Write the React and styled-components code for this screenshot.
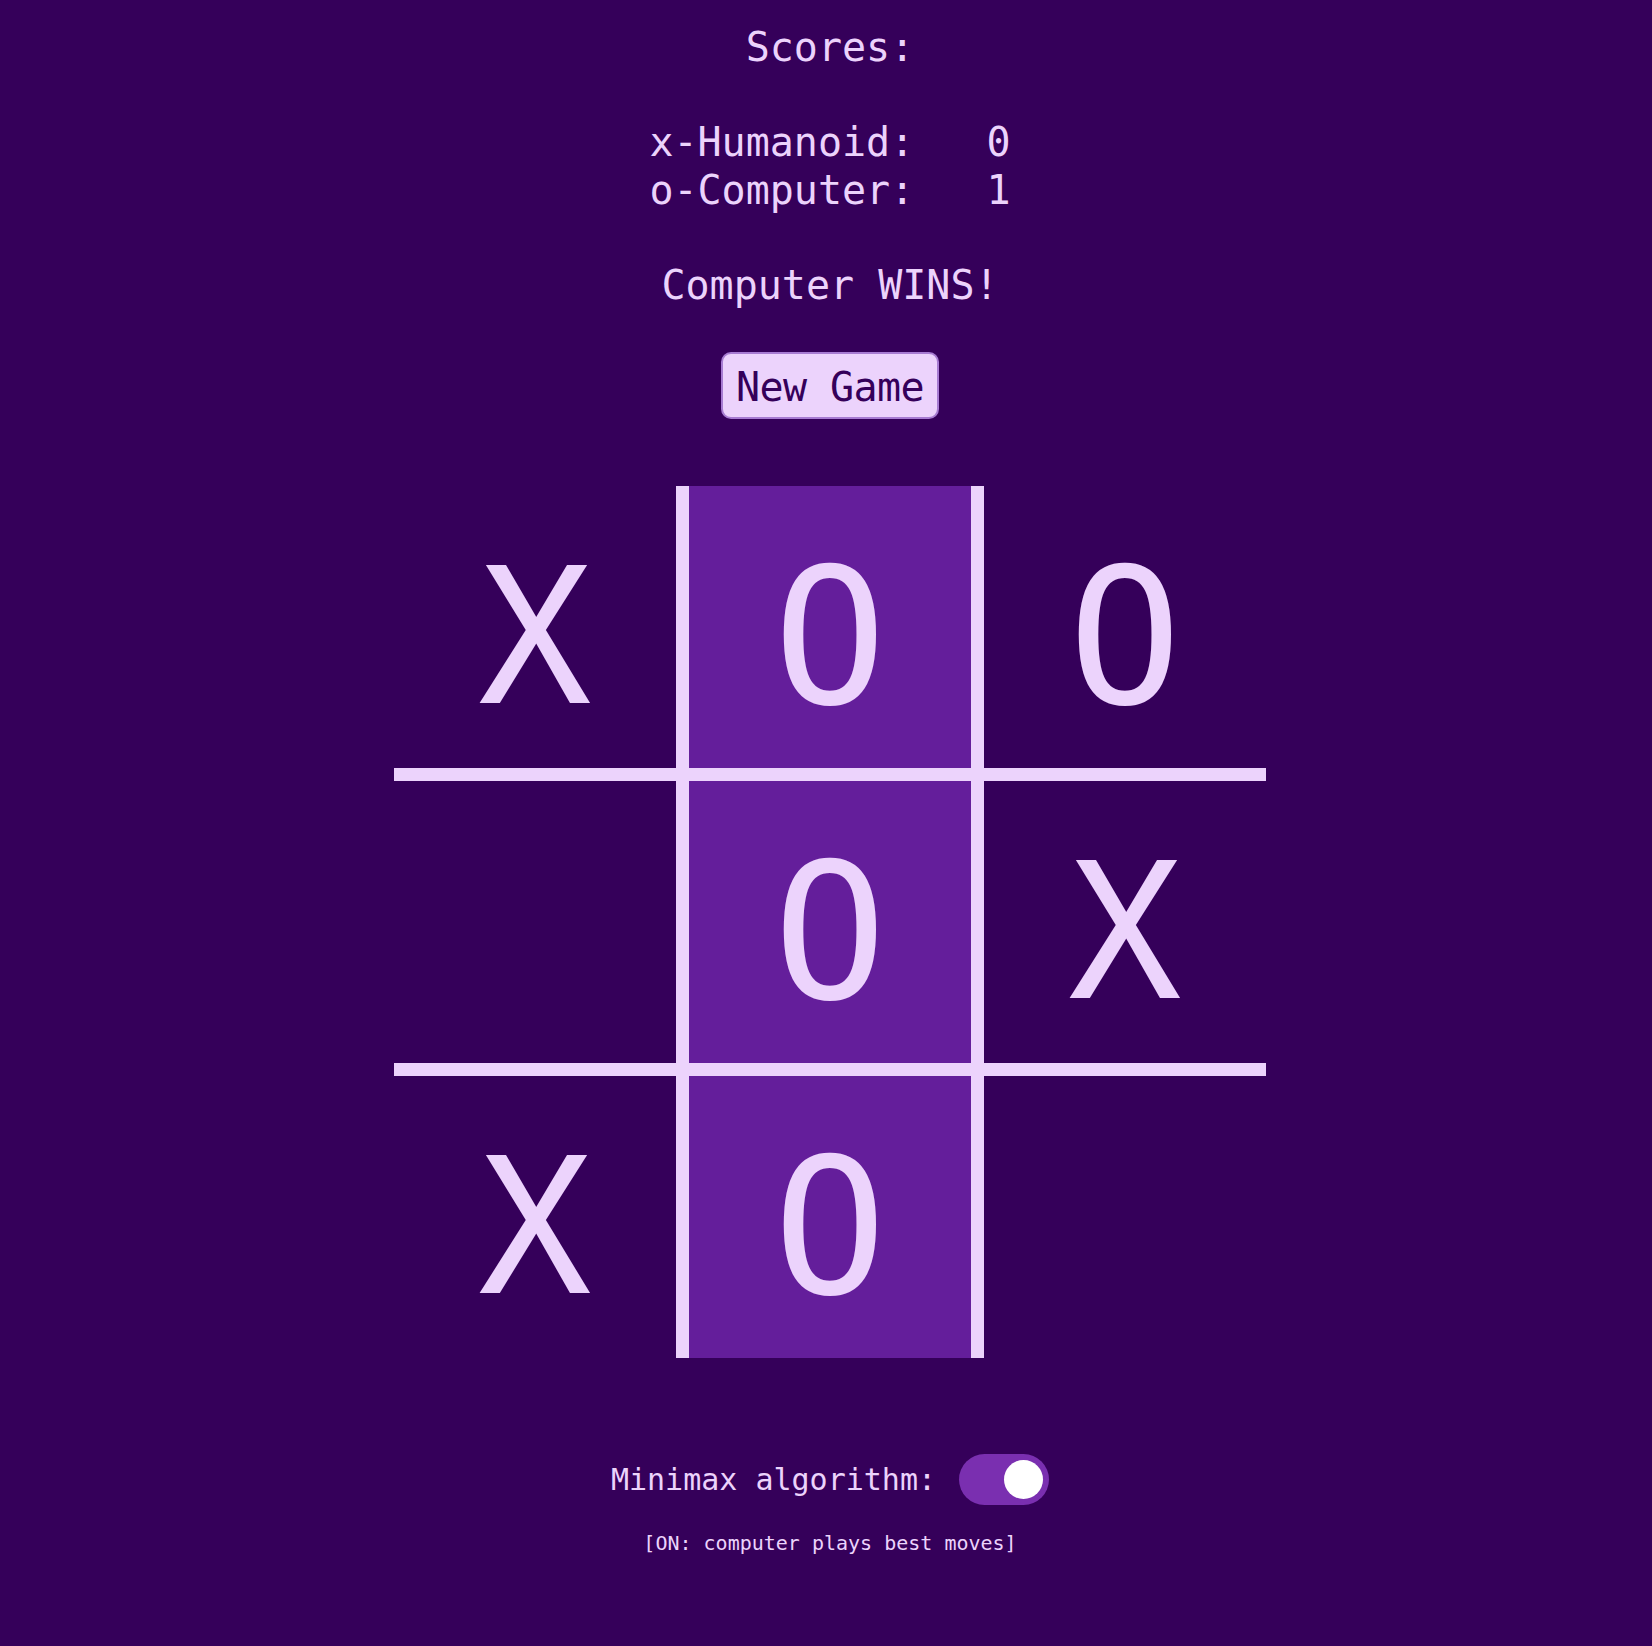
import React, { useState } from "react";
import styled, { createGlobalStyle } from "styled-components";

const GlobalStyle = createGlobalStyle`
  html, body {
    margin: 0;
    padding: 0;
    background: #35005a;
  }
  body {
    font-family: "DejaVu Sans Mono", monospace;
    color: #ecd3fc;
  }
`;

const Page = styled.div`
  box-sizing: border-box;
  width: 100%;
  min-height: 1646px;
  padding: 24px 0 0 8px;
  display: flex;
  flex-direction: column;
  align-items: center;
`;

const ScoreBlock = styled.div`
  display: flex;
  flex-direction: column;
  align-items: center;
  font-size: 40px;
  line-height: 47.5px;
`;

const Line = styled.div`
  white-space: pre;
  text-align: center;
  margin-top: ${(p) => (p.$gap ? "47.5px" : "0")};
`;

const NewGameButton = styled.button`
  margin-top: 43px;
  font-family: "DejaVu Sans Mono", monospace;
  font-size: 40px;
  line-height: 40px;
  letter-spacing: -0.6px;
  padding: 13px 13px 10px;
  color: #35005a;
  background: #ecd3fc;
  border: 2px solid #a77bd2;
  border-radius: 10px;
  cursor: pointer;
`;

const Board = styled.div`
  margin-top: 67px;
  display: grid;
  grid-template-columns: repeat(3, 282px);
  grid-template-rows: repeat(3, 282px);
  gap: 13px;
  background: #ecd3fc;
`;

const Cell = styled.div`
  box-sizing: border-box;
  display: flex;
  align-items: center;
  justify-content: center;
  padding-top: 21px;
  background: ${(p) => (p.$win ? "#641e9b" : "#35005a")};
  font-size: 189px;
  color: #ecd3fc;
  cursor: pointer;
`;

const SettingRow = styled.div`
  margin-top: 96px;
  display: flex;
  align-items: center;
  font-size: 30px;
`;

const Track = styled.button`
  box-sizing: border-box;
  margin-left: 23px;
  width: 90px;
  height: 51px;
  padding: 0 6px;
  border: none;
  border-radius: 26px;
  background: ${(p) => (p.$on ? "#7a2fb0" : "#5a3a78")};
  display: flex;
  align-items: center;
  justify-content: ${(p) => (p.$on ? "flex-end" : "flex-start")};
  cursor: pointer;
`;

const Knob = styled.span`
  width: 39px;
  height: 39px;
  border-radius: 50%;
  background: #ffffff;
`;

const Hint = styled.div`
  margin-top: 26px;
  font-size: 20px;
  white-space: pre;
`;

const board = ["X", "O", "O", "", "O", "X", "X", "O", ""];
const winLine = [1, 4, 7];

export default function App() {
  const [minimax, setMinimax] = useState(true);

  return (
    <Page>
      <GlobalStyle />
      <ScoreBlock>
        <Line>Scores:</Line>
        <Line $gap>{"x-Humanoid:   0"}</Line>
        <Line>{"o-Computer:   1"}</Line>
        <Line $gap>Computer WINS!</Line>
      </ScoreBlock>
      <NewGameButton>New Game</NewGameButton>
      <Board>
        {board.map((v, i) => (
          <Cell key={i} $win={winLine.includes(i)}>
            {v}
          </Cell>
        ))}
      </Board>
      <SettingRow>
        <span>Minimax algorithm:</span>
        <Track $on={minimax} onClick={() => setMinimax(!minimax)}>
          <Knob />
        </Track>
      </SettingRow>
      <Hint>
        {minimax
          ? "[ON: computer plays best moves]"
          : "[OFF: computer plays random moves]"}
      </Hint>
    </Page>
  );
}
